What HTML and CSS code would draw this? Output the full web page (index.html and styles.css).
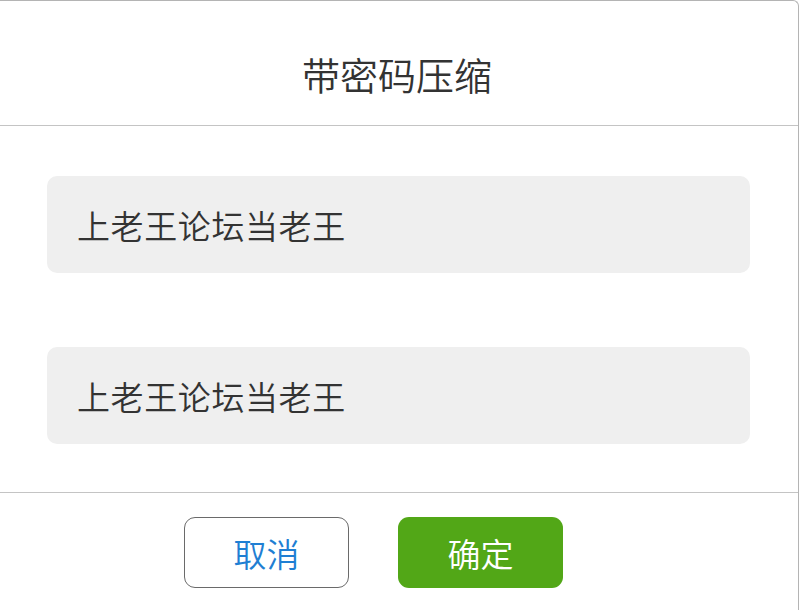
FILE: index.html
```html
<!DOCTYPE html>
<html lang="zh-CN">
<head>
<meta charset="utf-8">
<title>带密码压缩</title>
<link rel="stylesheet" href="styles.css">
</head>
<body>
<div class="dialog">
  <div class="header">
    <div class="title">带密码压缩</div>
  </div>
  <div class="content">
    <div class="field">上老王论坛当老王</div>
    <div class="field">上老王论坛当老王</div>
  </div>
  <div class="footer">
    <div class="btn btn-cancel">取消</div>
    <div class="btn btn-ok">确定</div>
  </div>
</div>
</body>
</html>
```
FILE: styles.css
```css
html, body {
  margin: 0;
  padding: 0;
  background: #ffffff;
}
body {
  font-family: "Noto Sans CJK SC", "Noto Sans", sans-serif;
  font-weight: 350;
  width: 800px;
  height: 610px;
  overflow: hidden;
}
.dialog {
  width: 798px;
  height: 609px;
  border-top: 1px solid #b4b4b4;
  border-right: 1px solid #b4b4b4;
  border-top-right-radius: 6px;
  background: #ffffff;
  display: flex;
  flex-direction: column;
}
.header {
  height: 125px;
  border-bottom: 1px solid #c4c4c4;
  box-sizing: border-box;
  padding-top: 53px;
  display: flex;
  justify-content: center;
}
.title {
  font-size: 38px;
  line-height: 40px;
  color: #333333;
  margin-left: -4px;
}
.content {
  padding: 50px 48px 48px 47px;
  display: flex;
  flex-direction: column;
  gap: 74px;
  border-bottom: 1px solid #c4c4c4;
}
.field {
  height: 97px;
  background: #efefef;
  border-radius: 10px;
  padding-left: 30px;
  display: flex;
  align-items: center;
  font-size: 33px;
  color: #333333;
  letter-spacing: 0.6px;
}
.footer {
  padding-top: 24px;
  padding-left: 184px;
  display: flex;
  gap: 49px;
}
.btn {
  width: 165px;
  height: 71px;
  box-sizing: border-box;
  border-radius: 11px;
  display: flex;
  align-items: center;
  justify-content: center;
  font-size: 33px;
}
.btn-cancel {
  border: 1px solid #6a6a6a;
  color: #1f7fd3;
  background: #ffffff;
}
.btn-ok {
  background: #52a717;
  color: #ffffff;
}
```
